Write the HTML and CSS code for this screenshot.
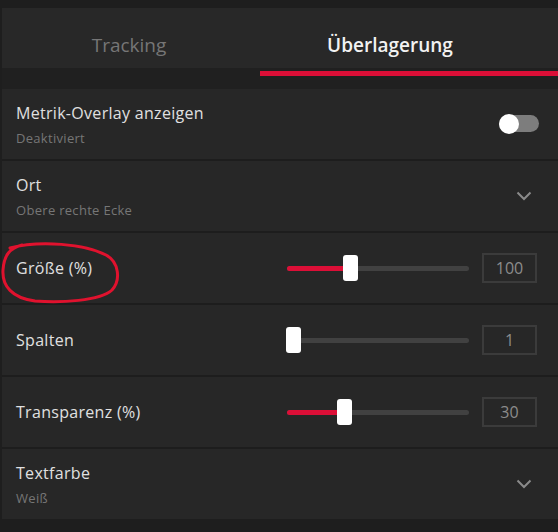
FILE: index.html
```html
<!DOCTYPE html>
<html lang="de">
<head>
<meta charset="utf-8">
<title>Überlagerung</title>
<link rel="stylesheet" href="styles.css">
</head>
<body>
<div class="app">
  <div class="tabs">
    <div class="tab tab-left">Tracking</div>
    <div class="tab tab-right active">Überlagerung</div>
  </div>
  <div class="band">
    <div></div>
    <div class="underline"></div>
  </div>
  <div class="rows">
    <div class="row">
      <div class="text">
        <div class="label">Metrik-Overlay anzeigen</div>
        <div class="sub">Deaktiviert</div>
      </div>
      <div class="toggle"><div class="toggle-track"></div><div class="toggle-knob"></div></div>
    </div>
    <div class="row">
      <div class="text">
        <div class="label">Ort</div>
        <div class="sub">Obere rechte Ecke</div>
      </div>
      <svg class="chevron" width="16" height="10" viewBox="0 0 16 10"><path d="M1.5 1.5 L8 8 L14.5 1.5" fill="none" stroke="#8a8a8a" stroke-width="2"/></svg>
    </div>
    <div class="row slider-row">
      <div class="label">Größe (%)</div>
      <div class="control">
        <div class="slider">
          <div class="track"></div>
          <div class="fill" style="width:60px"></div>
          <div class="thumb" style="left:56px"></div>
        </div>
        <div class="value">100</div>
      </div>
      <svg class="annotation" width="125" height="66" viewBox="0 0 125 66"><path d="M10 8 C 40 0, 85 4, 106 15 C 119 22, 121 40, 112 50 C 100 61, 60 63, 35 61 C 12 58, 2 46, 3 30 C 4 15, 10 8, 22 5" fill="none" stroke="#e0122e" stroke-width="3" stroke-linecap="round"/></svg>
    </div>
    <div class="row slider-row">
      <div class="label">Spalten</div>
      <div class="control">
        <div class="slider">
          <div class="track"></div>
          <div class="thumb" style="left:-1px"></div>
        </div>
        <div class="value">1</div>
      </div>
    </div>
    <div class="row slider-row">
      <div class="label">Transparenz (%)</div>
      <div class="control">
        <div class="slider">
          <div class="track"></div>
          <div class="fill" style="width:54px"></div>
          <div class="thumb" style="left:50px"></div>
        </div>
        <div class="value">30</div>
      </div>
    </div>
    <div class="row">
      <div class="text">
        <div class="label">Textfarbe</div>
        <div class="sub">Weiß</div>
      </div>
      <svg class="chevron" width="16" height="10" viewBox="0 0 16 10"><path d="M1.5 1.5 L8 8 L14.5 1.5" fill="none" stroke="#8a8a8a" stroke-width="2"/></svg>
    </div>
  </div>
</div>
</body>
</html>
```
FILE: styles.css
```css
* { box-sizing: border-box; }
html, body { margin: 0; padding: 0; background: #1f1f1f; }
body {
  font-family: "Open Sans", "Noto Sans", "Liberation Sans", sans-serif;
  color: #e2e2e2;
}
.app {
  position: relative;
  width: 558px;
  height: 532px;
  overflow: hidden;
  background: #1e1e1e;
  padding: 8px 0 0 2px;
}
.tabs {
  display: grid;
  grid-template-columns: 258px 1fr;
  height: 60px;
  background: #282828;
}
.tab {
  font-size: 19px;
  line-height: 26px;
  padding-top: 24px;
  text-align: center;
  color: #767676;
}
.tab-left { padding-right: 4px; }
.tab-right { padding-right: 38px; }
.tab.active { color: #f2f2f2; font-weight: 600; }
.band {
  display: grid;
  grid-template-columns: 258px 1fr;
  height: 21px;
  background: #202020;
}
.underline {
  margin-top: 3px;
  height: 5px;
  background: #dc0f37;
}
.rows {
  display: flex;
  flex-direction: column;
  gap: 2px;
  background: #1d1d1d;
}
.row {
  position: relative;
  height: 70px;
  background: #272727;
  display: flex;
  align-items: center;
  justify-content: space-between;
  padding: 0 19px 0 14px;
}
.text { display: flex; flex-direction: column; padding-top: 3px; }
.label { font-size: 16px; line-height: 25px; color: #e0e0e0; letter-spacing: 0.3px; }
.sub { font-size: 13px; line-height: 25px; color: #767676; letter-spacing: 0.3px; }
.toggle {
  position: relative;
  width: 40px;
  height: 20px;
  display: flex;
  align-items: center;
  margin-top: -1px;
}
.toggle-track {
  width: 40px;
  height: 17px;
  border-radius: 9px;
  background: #7d7d7d;
}
.toggle-knob {
  position: absolute;
  left: 0;
  top: 0;
  width: 20px;
  height: 20px;
  border-radius: 50%;
  background: #ffffff;
}
.chevron { margin-right: 7px; }
.slider-row { padding-right: 21px; }
.control { display: flex; align-items: center; gap: 13px; }
.slider {
  position: relative;
  width: 182px;
  height: 26px;
  display: flex;
  align-items: center;
}
.track {
  width: 100%;
  height: 5px;
  border-radius: 3px;
  background: #414141;
}
.fill {
  position: absolute;
  left: 0;
  top: 10.5px;
  height: 5px;
  border-radius: 3px;
  background: #dc0f37;
}
.thumb {
  position: absolute;
  top: 0;
  width: 15px;
  height: 26px;
  border-radius: 3px;
  background: #ffffff;
}
.value {
  width: 55px;
  height: 30px;
  border: 2px solid #3b3b3b;
  color: #8c8c8c;
  font-size: 16px;
  line-height: 26px;
  text-align: center;
}
.annotation {
  position: absolute;
  left: -2px;
  top: 7px;
}
```
